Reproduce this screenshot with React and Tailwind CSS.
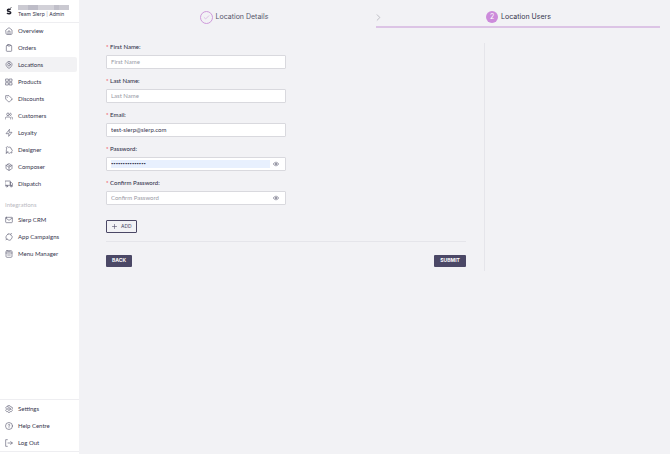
import {
  FiHome, FiClipboard, FiGrid, FiTag, FiUsers, FiZap, FiTruck, FiMail, FiPlus, FiCheck, FiChevronRight,
} from 'react-icons/fi';
import { LuPackage } from 'react-icons/lu';

const stroke = { fill: 'none', stroke: 'currentColor', strokeWidth: 2, strokeLinecap: 'round', strokeLinejoin: 'round' };

const LocationIcon = (props) => (
  <svg viewBox="0 0 24 24" {...stroke} {...props}>
    <path d="M12 2c5 0 9 3.500 9 8.500 0 5-4.500 9.500-9 11.500-4.500-2-9-6.500-9-11.500C3 5.500 7 2 12 2z" />
    <circle cx="12" cy="11" r="4" />
  </svg>
);

const DesignerIcon = (props) => (
  <svg viewBox="0 0 24 24" {...stroke} {...props}>
    <path d="M4 21V11l2-2-3-4 4-3 4 2c5-2 8 1 7 5 5 1 5 6 2 8l1 4-5-1-3 2-4-2z" />
    <path d="M4 21l5-5" />
  </svg>
);

const CampaignIcon = (props) => (
  <svg viewBox="0 0 24 24" {...stroke} {...props}>
    <path d="M9 3.500c5-2 8 0 8 3 4 1 5.500 4 4 8l-3 5c-3 3-7 3-9 0-5 0-7-3-6-8 1-4 3-6 6-8z" />
    <path d="M17 3l3-1M3 20l3-2" />
  </svg>
);

const MenuIcon = (props) => (
  <svg viewBox="0 0 24 24" {...stroke} {...props}>
    <rect x="3" y="2" width="18" height="20" rx="3" />
    <path d="M3 9h18M8 5h8M8 15h8" />
  </svg>
);

const SettingsIcon = (props) => (
  <svg viewBox="0 0 24 24" {...stroke} {...props}>
    <path d="M9.500 2h5l1 2.500 3 1.500 2.500 0 1.500 4-2 2 0 1.500 1.500 2.500-3 4-3-.500L14.500 22h-5L8 19.500 5 20l-3-4 2-2.500V11L2 8.500 4.500 5 8 5z" />
    <circle cx="12" cy="12" r="4" />
  </svg>
);

const HelpIcon = (props) => (
  <svg viewBox="0 0 24 24" {...stroke} {...props}>
    <circle cx="12" cy="12" r="10.500" />
    <path d="M9.500 9c0-3 5-3 5 0 0 2-2.500 2-2.500 4.500M12 17v.200" />
  </svg>
);

const LogOutIcon = (props) => (
  <svg viewBox="0 0 24 24" {...stroke} {...props}>
    <path d="M7 2H2v20h5M9 12h13M17 8l5 4-5 4" />
  </svg>
);

const EyeIcon = (props) => (
  <svg viewBox="0 0 24 24" {...stroke} {...props}>
    <path d="M1 12c3-5 7-7 11-7s8 2 11 7c-3 5-7 7-11 7s-8-2-11-7z" strokeWidth="3" />
    <circle cx="12" cy="12" r="4" fill="currentColor" />
  </svg>
);

const mainLinks = [
  { label: 'Overview', icon: FiHome },
  { label: 'Orders', icon: FiClipboard },
  { label: 'Locations', icon: LocationIcon, active: true },
  { label: 'Products', icon: FiGrid },
  { label: 'Discounts', icon: FiTag },
  { label: 'Customers', icon: FiUsers },
  { label: 'Loyalty', icon: FiZap },
  { label: 'Designer', icon: DesignerIcon },
  { label: 'Composer', icon: LuPackage },
  { label: 'Dispatch', icon: FiTruck },
];

const integrationLinks = [
  { label: 'Slerp CRM', icon: FiMail },
  { label: 'App Campaigns', icon: CampaignIcon },
  { label: 'Menu Manager', icon: MenuIcon },
];

const footerLinks = [
  { label: 'Settings', icon: SettingsIcon },
  { label: 'Help Centre', icon: HelpIcon },
  { label: 'Log Out', icon: LogOutIcon },
];

const fields = [
  { id: 'firstName', label: 'First Name', placeholder: 'First Name', type: 'text' },
  { id: 'lastName', label: 'Last Name', placeholder: 'Last Name', type: 'text' },
  { id: 'email', label: 'Email', value: 'test-slerp@slerp.com', type: 'email' },
  { id: 'password', label: 'Password', value: 'slerp-test-pass', type: 'password', filled: true },
  { id: 'confirm', label: 'Confirm Password', placeholder: 'Confirm Password', type: 'password' },
];

function NavList({ links }) {
  return (
    <ul className="flex flex-col gap-[2px]">
      {links.map(({ label, icon: Icon, active }) => (
        <li key={label}>
          <a
            href="#"
            className={`mr-[2px] flex h-[15px] items-center gap-[5px] rounded-r-[2px] pl-[5px] whitespace-nowrap ${active ? 'bg-[#f2f2f4]' : ''}`}>
            <Icon className="h-2 w-2 shrink-0 text-[#65657a]" />
            {label}
          </a>
        </li>
      ))}
    </ul>
  );
}

function Sidebar() {
  return (
    <aside className="flex w-[79px] shrink-0 flex-col bg-white text-[6px] leading-2 text-[#35354d]">
      <header className="flex h-[23px] items-center gap-[6px] border-b border-[#eeeef1] pl-[6px]">
        <svg viewBox="0 0 24 28" className="h-2 w-[6px] shrink-0 text-[#20202c]" fill="none" stroke="currentColor">
          <path d="M18 9C14 5 5 7 6 12c1 5 13 3 13 9 0 5-10 6-15 1" strokeWidth="6" />
          <path d="M16 4l6-4" strokeWidth="3" />
        </svg>
        <div className="min-w-0 whitespace-nowrap">
          <div className="flex h-[5px] w-[51px]">
            <span className="flex-2 bg-[#cbcad2]" />
            <span className="flex-2 bg-[#bdbcc7]" />
            <span className="flex-3 bg-[#d2d1d8]" />
            <span className="flex-1 bg-[#c0bfc9]" />
            <span className="flex-2 bg-[#cac9d1]" />
          </div>
          <p className="font-['Inter',sans-serif] text-[5px]">Team Slerp <span className="text-[#a0a0ac]">|</span> Admin</p>
        </div>
      </header>
      <nav>
        <NavList links={mainLinks} />
        <h2 className="pt-[10px] pb-[3px] pl-[5px] text-[#b9b9c1]">Integrations</h2>
        <NavList links={integrationLinks} />
      </nav>
      <nav className="mt-auto mb-[2px] border-y border-[#eeeef1] pt-px pb-px">
        <NavList links={footerLinks} />
      </nav>
    </aside>
  );
}

function Steps() {
  return (
    <ol className="flex font-['Inter',sans-serif] text-[7px] leading-2 text-[#35354d]">
      <li className="flex h-[28px] flex-1 items-center justify-center gap-[3px] pt-[6px]">
        <span className="flex size-[13px] items-center justify-center rounded-full border border-[#cf9bdb] text-[#cf9bdb]">
          <FiCheck className="size-[7px]" />
        </span>
        <span className="text-[#55556a]">Location Details</span>
      </li>
      <li className="flex h-[28px] flex-1 items-center border-b-2 border-[#dcc4e5] pt-[8px]">
        <FiChevronRight className="-ml-[3px] size-[11px] text-[#b9b9c0]" strokeWidth={2} />
        <div className="flex flex-1 items-center justify-center gap-[3px] pr-[7px]">
          <span className="flex size-3 items-center justify-center rounded-full bg-[#cc8bdb] text-white">2</span>
          <span>Location Users</span>
        </div>
      </li>
    </ol>
  );
}

function Field({ id, label, placeholder, value, type, filled }) {
  return (
    <div className="flex flex-col gap-1">
      <label htmlFor={id} className="leading-2 font-medium">
        <span className="text-[#f0484c]">*</span> {label}:
      </label>
      <div className="flex h-[14px] items-center gap-[3px] rounded-[1px] border border-[#d9d9de] bg-white px-1">
        <input
          id={id}
          type={type}
          defaultValue={value}
          placeholder={placeholder}
          className={`h-2 min-w-0 flex-1 leading-2 outline-none placeholder:text-[#9a9aa5] ${filled ? 'bg-[#e8f0fe] text-[4px]' : ''}`}
        />
        {type === 'password' && (
          <button type="button" aria-label="Show password" className="pr-[2px] text-[#8a8a9a]">
            <EyeIcon className="size-[6px]" />
          </button>
        )}
      </div>
    </div>
  );
}

export default function App() {
  return (
    <div className="flex min-h-screen bg-[#f2f2f5] font-['Lato',sans-serif]">
      <Sidebar />
      <main className="flex-1 pr-[10px] pl-[13px]">
        <Steps />
        <div className="flex pt-[15px] pl-[14px]">
          <form
            className="w-[68.4%] border-r border-[#e5e5ea] pr-[18px] pb-1 text-[6px] text-[#35354d]"
            onSubmit={(e) => e.preventDefault()}>
            <div className="flex w-1/2 flex-col gap-2">
              {fields.map((field) => <Field key={field.id} {...field} />)}
            </div>
            <button
              type="button"
              className="mt-[15px] flex h-[13px] items-center gap-[3px] rounded-[1px] border border-[#4b4866] px-1 font-['Inter',sans-serif] text-[5px] text-[#4b4866]">
              <FiPlus className="size-[7px]" /> ADD
            </button>
            <div className="mt-2 flex justify-between border-t border-[#e5e5ea] pt-[13px] font-['Inter',sans-serif] text-[5px] font-bold text-white">
              <button type="button" className="h-3 rounded-[1px] bg-[#4b4866] px-[6px]">BACK</button>
              <button type="submit" className="h-3 rounded-[1px] bg-[#4b4866] px-[6px]">SUBMIT</button>
            </div>
          </form>
        </div>
      </main>
    </div>
  );
}
